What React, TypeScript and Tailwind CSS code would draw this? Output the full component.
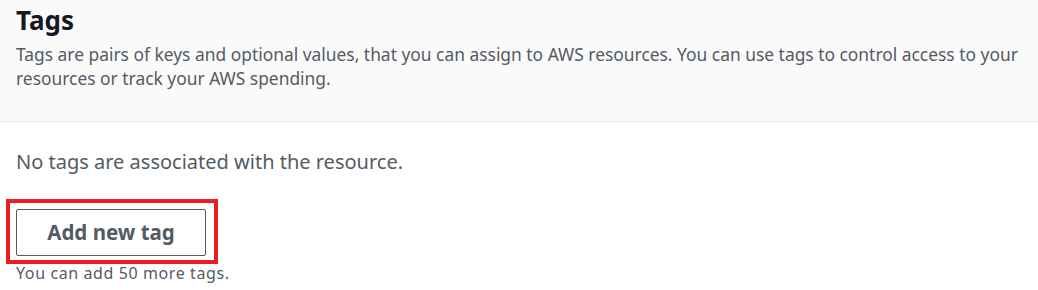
export default function App() {
  return (
    <div className="w-[1038px] h-[290px] bg-white font-['Noto_Sans',sans-serif] overflow-hidden">
      <div className="h-[122px] bg-[#fafafa] border-b border-[#eaeded] px-4 pt-1">
        <h2 className="text-[26px] leading-[32px] font-bold text-[#16191f]">Tags</h2>
        <p className="mt-[6px] text-[17.4px] leading-6 text-[#545b64]">
          Tags are pairs of keys and optional values, that you can assign to AWS resources. You can use tags to control access to your resources or track your AWS spending.
        </p>
      </div>
      <div className="px-4 pt-[26px]">
        <p className="text-[20px] leading-[28px] text-[#545b64]">No tags are associated with the resource.</p>
        <div className="mt-[33px] relative w-fit">
          <button className="w-[190px] h-[47px] border border-[#545b64] rounded-[2px] bg-white text-[20.5px] font-bold text-[#545b64]">
            Add new tag
          </button>
          <span className="absolute left-[-10px] top-[-10px] w-[212px] h-[65px] border-4 border-[#ec1c24] pointer-events-none" />
        </div>
        <p className="mt-[5px] text-[16px] leading-6 tracking-[0.6px] text-[#545b64]">You can add 50 more tags.</p>
      </div>
    </div>
  );
}
